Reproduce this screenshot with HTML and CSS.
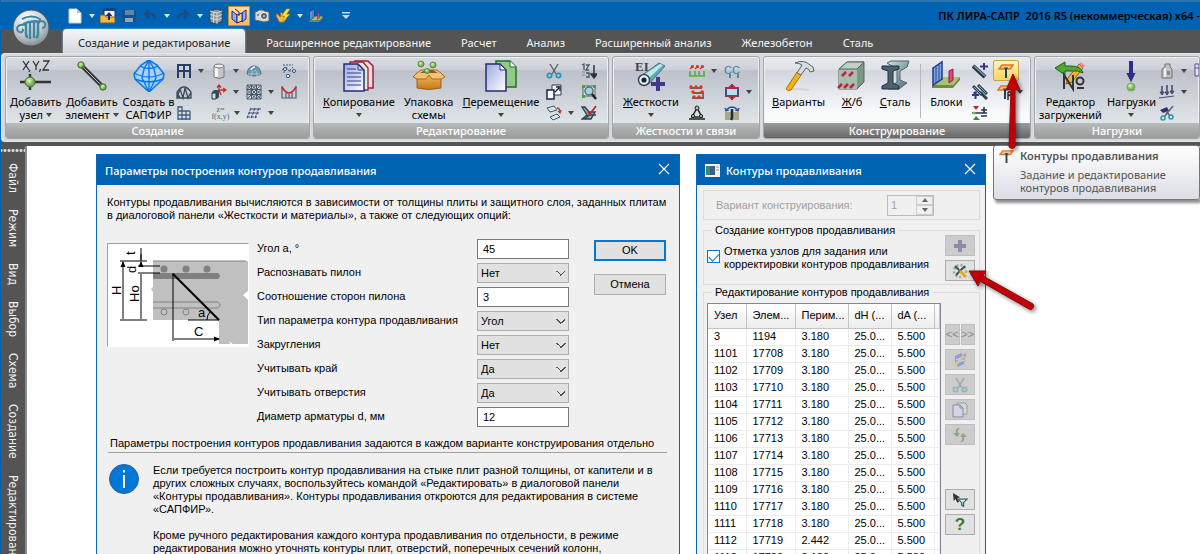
FILE: index.html
```
<!DOCTYPE html>
<html lang="ru">
<head>
  <meta charset="UTF-8" />
  <meta name="viewport" content="width=device-width, initial-scale=1.0"/>
  <title>ПК ЛИРА-САПР 2016 R5</title>
  <link rel="stylesheet" href="styles.css">
</head>
<body>
  <!-- shared icons -->
  <svg class="defs" width="0" height="0">
    <defs>
      <linearGradient id="steel" x1="0" y1="0" x2="1" y2="1"><stop offset="0" stop-color="#cfe0e4"/><stop offset="1" stop-color="#4c6a74"/></linearGradient>
      <linearGradient id="box" x1="0" y1="0" x2="0" y2="1"><stop offset="0" stop-color="#f3b95c"/><stop offset="1" stop-color="#c27a1c"/></linearGradient>
      <linearGradient id="sheet" x1="0" y1="0" x2="1" y2="1"><stop offset="0" stop-color="#9aa9e0"/><stop offset="1" stop-color="#fff"/></linearGradient>
      <radialGradient id="node" cx=".4" cy=".35"><stop offset="0" stop-color="#d8f5b8"/><stop offset="1" stop-color="#6bb04a"/></radialGradient>
      <radialGradient id="orb" cx=".4" cy=".25" r=".8"><stop offset="0" stop-color="#fff"/><stop offset=".6" stop-color="#c3c8cc"/><stop offset="1" stop-color="#7e8488"/></radialGradient>
      <marker id="tip" viewBox="0 0 6 6" refX="5" refY="3" markerWidth="6" markerHeight="6" orient="auto-start-reverse"><path d="M0 0.5L6 3L0 5.5z"/></marker>
    </defs>
    <symbol id="i-blocks" viewBox="0 0 32 32"><path d="M2 25l8-8h20l-7 8z" fill="#a9c46c"/><path d="M2 25h21l7-8v3l-7 8H2z" fill="#6d8c3c"/><path d="M3 8l9-6v17l-9 6z" fill="#7fa3dd" stroke="#1f3c86" stroke-width="1.5"/><path d="M6 7v16M9 5v16" stroke="#2c4f9f"/><path d="M19 11l4-2v11l-4 3z" fill="#d94b78" stroke="#8e1f45"/></symbol>
    <symbol id="i-punch" viewBox="0 0 16 16"><path d="M4 2h11l-3 4H1z" fill="#f9c48a" stroke="#e07818" stroke-width="1.5"/><path d="M8 5v10" stroke="#20405e" stroke-width="2"/><path d="M6 5h4" stroke="#20405e"/></symbol>
    <symbol id="i-cut" viewBox="0 0 16 16"><path d="M4 1l6 10M12 1L6 11" stroke="#59656c" stroke-width="1.4" fill="none"/><circle cx="3.500" cy="12.500" r="2.200" fill="none" stroke="#2a94b8" stroke-width="1.700"/><circle cx="12.500" cy="12.500" r="2.200" fill="none" stroke="#2a94b8" stroke-width="1.700"/></symbol>
    <symbol id="i-caret" viewBox="0 0 6 4"><path d="M0 0h6L3 4z"/></symbol>
    <symbol id="i-close" viewBox="0 0 12 12"><path d="M1 1l10 10M11 1L1 11" stroke="#fff" stroke-width="1.200"/></symbol>
  </svg>

  <header class="titlebar">
    <nav class="quick" aria-label="Быстрый доступ">
      <button class="qbtn" aria-label="Новый"><svg viewBox="0 0 16 16"><path d="M2 1h8l4 4v10H2z" fill="#fff" stroke="#c8d0d8"/><path d="M10 1v4h4z" fill="#b8c0c8"/></svg><svg class="caret"><use href="#i-caret"/></svg></button>
      <button class="qbtn" aria-label="Открыть"><svg viewBox="0 0 16 16"><path d="M4 1h11v9H4z" fill="#f4f8fc" stroke="#1c3158"/><path d="M4 1h11v2H4z" fill="#24406e"/><path d="M0 15V7h5l1 2h9v6z" fill="#f0b84a" stroke="#8a5a10"/><path d="M9 4L5.500 8H8v4h2V8h2.500z" fill="#1c3158"/></svg></button>
      <button class="qbtn" aria-label="Сохранить"><svg viewBox="0 0 16 16"><path d="M1 2h14v12H2l-1-1z" fill="#195088"/><path d="M4 2h9v5H4z" fill="#5c86aa"/><path d="M4 10h8v4H4z" fill="#8ba9c0"/></svg></button>
      <button class="qbtn" aria-label="Отменить"><svg viewBox="0 0 16 16"><path d="M3 6h6q4 0 4 5M7 2L3 6l4 4" fill="none" stroke="#1a4c88" stroke-width="2.500"/></svg><svg class="caret"><use href="#i-caret"/></svg></button>
      <button class="qbtn" aria-label="Вернуть"><svg viewBox="0 0 16 16"><path d="M13 6H7q-4 0-4 5M9 2l4 4-4 4" fill="none" stroke="#1a4c88" stroke-width="2.500"/></svg><svg class="caret"><use href="#i-caret"/></svg></button>
      <button class="qbtn" aria-label="Куб"><svg viewBox="0 0 16 16"><path d="M2 3l7-2 5 2v10l-5 3-7-2z" fill="#8c999e" stroke="#38464c"/><path d="M2 3l7 2 5-2M9 5v11M2 6.500l7 2M2 10l7 2M9 8.500l5-2M9 12l5-2M5.500 4v11" fill="none" stroke="#dbe6ea" stroke-width=".8"/></svg></button>
      <button class="qbtn picked" aria-label="Книга"><svg viewBox="0 0 16 16"><path d="M1 3l5 4v8l-5-4zM11 5l4-3v9l-4 3z" fill="#8db0e0" stroke="#1e2a78"/><path d="M6 7l5-2v8l-5 2z" fill="#f8d890" stroke="#1e2a78"/><path d="M4 1l4 3v4" fill="none" stroke="#1e2a78"/></svg></button>
      <button class="qbtn" aria-label="Снимок"><svg viewBox="0 0 16 16"><path d="M1 4l3-1 1-1h4l1 1 5 1v9l-5 1-9-2z" fill="#d3d6d6" stroke="#666"/><circle cx="10" cy="8" r="3.500" fill="#454d54" stroke="#fff"/><circle cx="10" cy="8" r="1.500" fill="#8cb0d0"/><path d="M3 6h2v2H3z" fill="#888"/></svg></button>
      <button class="qbtn" aria-label="Расчет"><svg viewBox="0 0 18 16"><path d="M2 5l4 4V4h2l1 4 2 1 2 2-3 4H5L1 8z" fill="#f1ba55" stroke="#8a5510" stroke-width=".8"/><path d="M13 0L7 8h4l-3 7 9-9h-4l4-6z" fill="#ffe437" stroke="#b98a00" stroke-width=".7"/></svg><svg class="caret"><use href="#i-caret"/></svg></button>
      <button class="qbtn" aria-label="Блоки"><svg><use href="#i-blocks"/></svg></button>
      <button class="qbtn more" aria-label="Настройка"><svg viewBox="0 0 8 8"><path d="M0 0h8v1.500H0zM0 3h8L4 7z" fill="#cfd9e4"/></svg></button>
    </nav>
    <div class="app-title">ПК ЛИРА-САПР&nbsp; 2016 R5 (некоммерческая) x64 -</div>
  </header>
  <button class="app-orb" aria-label="Меню приложения">
    <svg viewBox="0 0 38 38"><circle cx="19" cy="19" r="18" fill="url(#orb)" stroke="#4d5458"/><g fill="none" stroke="#3f86a4" stroke-width="2"><path d="M13 16q-8-1-8 4 1 4 5 3 2-2 0-3M10 10q10-5 18 0l-2 4q4-4 7 0 1 5-3 5"/><path d="M14 13v12q0 3 2 3M18 13v17M22 12v17M26 12v13q0 3-2 4M11 15q8-4 17-2" stroke-width="2.500"/></g><path d="M12 12q8-4 15-1" fill="none" stroke="#bfe2ee"/></svg>
  </button>

  <nav class="tabs">
    <a class="active" href="#create">Создание и редактирование</a>
    <a href="#advanced">Расширенное редактирование</a>
    <a href="#calc">Расчет</a>
    <a href="#analysis">Анализ</a>
    <a href="#deep">Расширенный анализ</a>
    <a href="#concrete">Железобетон</a>
    <a href="#steel">Сталь</a>
  </nav>

  <main class="ribbon">
    <section class="group">
      <div class="tools">
        <button class="big"><svg viewBox="0 0 32 32"><g fill="none" stroke="#333" stroke-width="1.300"><path d="M3 1l6 9M9 1l-6 9M10 10l-1 2M13 1l3 5 3-5M16 6v4M20.500 9l-1 3M23 1h6l-6 9h6"/></g><path d="M0 22h31M10 14v16" stroke="#333" stroke-width="2.500"/><circle cx="10" cy="22" r="5" fill="url(#node)" stroke="#3f6b2b"/></svg><span>Добавить<br>узел <svg class="caret"><use href="#i-caret"/></svg></span></button>
        <button class="big"><svg viewBox="0 0 32 32"><path d="M5 5l22 22" stroke="#333" stroke-width="4"/><path d="M5 5l22 22" stroke="#b8bcbc"/><circle cx="5" cy="5" r="3.200" fill="url(#node)" stroke="#3f6b2b"/><circle cx="27" cy="27" r="3.200" fill="url(#node)" stroke="#3f6b2b"/></svg><span>Добавить<br>элемент <svg class="caret"><use href="#i-caret"/></svg></span></button>
        <button class="big"><svg viewBox="0 0 32 32"><path d="M16 0L8 5 1 14l1 5 14 13 14-13 1-5-7-9z" fill="#a9d0f8" stroke="#0878e8" stroke-width="1.500"/><path d="M16 0v32M16 0l-5 9-2 9 7 14 7-14-2-9zM7 6q9 5 18 0M1 13q15 8 30 0M2 19q14 6 28 0" fill="none" stroke="#0878e8" stroke-width="1.400"/></svg><span>Создать в<br>САПФИР</span></button>
        <div class="small-grid four">
          <button class="small" aria-label="Рама"><svg viewBox="0 0 16 16"><path d="M2 15V2h12v13M2 8h12M8 2v13" fill="none" stroke="#253f66" stroke-width="2"/></svg><svg class="caret"><use href="#i-caret"/></svg></button>
          <button class="small" aria-label="Цилиндр"><svg viewBox="0 0 16 16"><path d="M3 3v11q5 3 10 0V3q-5-3-10 0z" fill="#c4c6ca" stroke="#777"/><path d="M4.500 4.500v9.500M6 5v9" stroke="#fff" stroke-width="1.500"/><ellipse cx="8" cy="3" rx="5" ry="2" fill="#edeef0" stroke="#777"/></svg><svg class="caret"><use href="#i-caret"/></svg></button>
          <button class="small" aria-label="Купол"><svg viewBox="0 0 16 16"><path d="M1 11q1-8 7-8t7 8q-7 4-14 0z" fill="#6d98aa" stroke="#52717e"/><path d="M5 7q1-3 4-3" fill="none" stroke="#e4f2f6" stroke-width="1.500"/><path d="M2 11h12M5 13q1-4 2-5M11 13q0-4-2-6" fill="none" stroke="#a4c8d6"/></svg></button>
          <button class="small" aria-label="Ферма"><svg viewBox="0 0 16 16"><path d="M2 2h10M1 7l4-3M5 4l3 4 4-4M8 8h7M2 9h3" stroke="#455c78" fill="none" stroke-dasharray="2 1"/><circle cx="4" cy="6" r="1.500" fill="#fff" stroke="#2c4a6e"/><circle cx="13" cy="8" r="1.500" fill="#fff" stroke="#2c4a6e"/><circle cx="7" cy="13" r="1.700" fill="#fff" stroke="#2c4a6e"/></svg></button>
          <button class="small" aria-label="Арка"><svg viewBox="0 0 16 16"><path d="M1 14V8q7-10 14 0v6zM1 14l3-9 3 9 2-10 3 10 3-6M4 14l-3-6" fill="none" stroke="#374a58" stroke-width="1.300"/></svg></button>
          <button class="small" aria-label="Экструзия"><svg viewBox="0 0 16 16"><path d="M1 8l2-2h5v7l-2 2H1z" fill="#38505e"/><path d="M1 9h4v6H1z" fill="#c4e4f4" stroke="#234"/><path d="M8 6V2M6 3.500L8 1l2 2.500M8 6h6M12 4l3 2-3 2M8 6l2 5" fill="none" stroke="#cc2820" stroke-width="1.300"/></svg><svg class="caret"><use href="#i-caret"/></svg></button>
          <button class="small" aria-label="Сетка"><svg viewBox="0 0 16 16"><path d="M1 1h14v14H1zM1 5.500h14M1 10.500h14M5.500 1v14M10.500 1v14M1 5.500L5.500 1M1 10.500L10.500 1M1 15L15 1M5.500 15L15 5.500M10.500 15l4.500-4.500M1 1l14 14M5.500 1L15 10.500M1 5.500l9.500 9.500" fill="none" stroke="#3d5062" stroke-width=".9"/></svg><svg class="caret"><use href="#i-caret"/></svg></button>
          <button class="small" aria-label="Провис"><svg viewBox="0 0 16 16"><path d="M1 2v12h14V2M5 9v5M8 10v4M11 9v5" fill="none" stroke="#4a5d70" stroke-width="1.200"/><path d="M1 3q7 12 14 0" fill="none" stroke="#cf2524" stroke-width="1.700"/></svg></button>
          <button class="small" aria-label="Каркас"><svg viewBox="0 0 16 16"><path d="M2 1v14M6 1v14M10 6v9M14 6v9M2 2h4M2 6h12M2 10h12M2 14h12" fill="none" stroke="#3f5f84" stroke-width="1.300"/></svg></button>
          <button class="small fx"><span>z=<br>f(x,y)</span><svg class="caret"><use href="#i-caret"/></svg></button>
          <button class="small" aria-label="Плита"><svg viewBox="0 0 16 16"><path d="M5 4h10M3 8h10M1 12h10M5 3L1 13M9 3L5 13M13 3L9 13" fill="none" stroke="#46507e" stroke-width="1.200" stroke-dasharray="3 1"/></svg><svg class="caret"><use href="#i-caret"/></svg></button>
        </div>
      </div>
      <h2>Создание</h2>
    </section>

    <section class="group edit">
      <div class="tools">
        <button class="big"><svg viewBox="0 0 32 32"><path d="M12 1h13l5 5v22H12z" fill="#f6dde2" stroke="#9a2038" stroke-width="1.500"/><path d="M7 2h13l5 6v22H7z" fill="#dcedd8" stroke="#9a2038" stroke-width="1.300"/><path d="M1 4h14l6 6v21H1z" fill="url(#sheet)" stroke="#2a2b72" stroke-width="1.500"/><path d="M15 4v6h6M4 9h9M4 13h14M4 17h14M4 21h14M4 25h14" fill="none" stroke="#343a86"/></svg><span><u>К</u>опирование<br><svg class="caret"><use href="#i-caret"/></svg></span></button>
        <button class="big"><svg viewBox="0 0 32 32"><path d="M4 14h24v14q-12 3-24 0z" fill="url(#box)" stroke="#9e6014"/><path d="M4 13L0 17l4 2h9l3-4 3 4h9l4-2-4-4-4-3H8z" fill="#f3c272" stroke="#a86915"/><path d="M7 13h18l-5-3h-8z" fill="#8f5b18"/><circle cx="8" cy="4" r="3" fill="url(#node)" stroke="#588d40"/><circle cx="20" cy="5" r="3" fill="url(#node)" stroke="#588d40"/><circle cx="14" cy="11" r="2.500" fill="url(#node)" stroke="#588d40"/></svg><span>Упаковка<br>схемы</span></button>
        <button class="big"><svg viewBox="0 0 32 32"><path d="M11 1h14l6 6v20H11z" fill="#92cc84" stroke="#246b30" stroke-width="1.500"/><path d="M25 1v6h6" fill="#fff" stroke="#246b30"/><path d="M1 4h14l6 6v21H1z" fill="url(#sheet)" stroke="#2a2b72" stroke-width="1.500"/><path d="M15 4v6h6z" fill="#fff" stroke="#2a2b72"/></svg><span><u>П</u>еремещение<br><svg class="caret"><use href="#i-caret"/></svg></span></button>
        <div class="small-grid two">
          <button class="small" aria-label="Вырезать"><svg><use href="#i-cut"/></svg></button>
          <button class="small" aria-label="Нумерация"><svg viewBox="0 0 16 16"><path d="M1 2l2-1v6M5 2h3L5 7h3M5 10h3v4H5" fill="none" stroke="#455464" stroke-width="1.300"/><path d="M13 2v10M10 11l3 4 3-4z" stroke="#333" fill="#333" stroke-width="1.500"/><path d="M1 9h3M1 12h3" stroke="#888"/></svg></button>
          <button class="small" aria-label="Масштаб"><svg viewBox="0 0 16 16"><path d="M6 1h9v10H6z" fill="#f4f6fa" stroke="#2d3260"/><path d="M1 6h7v9H1z" fill="#fff" stroke="#20205c" stroke-width="1.500"/><path d="M9 8l4-4M10 3h4v4" fill="none" stroke="#222" stroke-width="1.300"/></svg></button>
          <button class="small" aria-label="Лупа"><svg viewBox="0 0 16 16"><path d="M2 2h12v10H2z" fill="#dce8ec" stroke="#4a645c"/><circle cx="8" cy="7" r="4" fill="#a6d1e2" stroke="#596a72" stroke-width="1.500"/><path d="M11 10l4 5" stroke="#222" stroke-width="2.500"/><path d="M1 1h3v3H1zM12 1h3v3h-3zM1 11h3v3H1z" fill="#47a03b"/></svg></button>
          <button class="small" aria-label="Поворот"><svg viewBox="0 0 16 16"><path d="M1 3l7-2 3 4-7 2zM4 12l7-3 3 3-7 3z" fill="#d7e7ec" stroke="#385968"/><path d="M11 3q3 0 3 4M12 6l2 2 1-3" fill="none" stroke="#c83428" stroke-width="1.300"/></svg><svg class="caret"><use href="#i-caret"/></svg></button>
          <button class="small" aria-label="Правка"><svg viewBox="0 0 16 16"><path d="M1 2h3l4 5h6l-4 7H1l5-4z" fill="#8fa9b4" stroke="#2e4550" stroke-width="1.400"/><path d="M4 14l4-4h7" fill="none" stroke="#2e4550" stroke-width="1.300"/><path d="M15 1L9 9 7 7" fill="none" stroke="#c62828" stroke-width="1.800"/></svg></button>
        </div>
      </div>
      <h2>Редактирование</h2>
    </section>

    <section class="group stiff">
      <div class="tools">
        <button class="big"><svg viewBox="0 0 32 32"><text x="0" y="11" class="ei">EI</text><path d="M6 16L24 3l6 3-16 18z" fill="#5fa9b4" stroke="#51717a"/><path d="M10 14L25 4l3 1-14 13z" fill="#b8ecec"/><circle cx="9" cy="20" r="5.500" fill="#eef1f4" stroke="#404858" stroke-width="1.500"/><circle cx="9" cy="20" r="2.600" fill="#16213a"/><path d="M16 24h14M23 17v14" stroke="#43388a" stroke-width="4"/></svg><span><u>Ж</u>есткости<br><svg class="caret"><use href="#i-caret"/></svg></span></button>
        <div class="small-grid two">
          <button class="small" aria-label="Связи"><svg viewBox="0 0 16 16"><path d="M1 6l3-3M2 3h2v2M6 6l3-3M7 3h2v2M11 6l3-3M12 3h2v2" fill="none" stroke="#cf3028" stroke-width="1.500"/><path d="M0 13h16M1 8v5M6 8v5M10 8v5M15 8v5" stroke="#55b436" stroke-width="1.700"/></svg><svg class="caret"><use href="#i-caret"/></svg></button>
          <button class="small" aria-label="Упругое основание"><svg viewBox="0 0 16 16"><text x="0" y="11" class="cc">CC</text><path d="M6 11v4M14 11v4" stroke="#333"/></svg></button>
          <button class="small" aria-label="Объединение"><svg viewBox="0 0 16 16"><path d="M1 4h12M4 9h10M3 14h12M2 2v3M14 7v6" stroke="#6c3228" stroke-width="1.300"/><g fill="#e23422"><circle cx="2" cy="3" r="1.700"/><circle cx="7" cy="3" r="1.700"/><circle cx="12" cy="3" r="1.700"/><circle cx="4" cy="8" r="1.700"/><circle cx="13" cy="8" r="1.700"/><circle cx="5" cy="13" r="1.700"/><circle cx="10" cy="13" r="1.700"/></g></svg></button>
          <button class="small" aria-label="Сечение"><svg viewBox="0 0 16 16"><path d="M8 0v3M8 13v3" stroke="#333" stroke-width="2"/><path d="M2 4h12v8H2z" fill="#b9ddec" stroke="#1e448a" stroke-width="1.800"/><path d="M1 4h14M1 12h14M5 3l3-2 3 2M5 13l3 2 3-2" fill="none" stroke="#c52d38" stroke-width="1.500"/></svg><svg class="caret"><use href="#i-caret"/></svg></button>
          <button class="small" aria-label="Опора"><svg viewBox="0 0 16 16"><path d="M8 3L3 12h10zM0 14h16" fill="none" stroke="#222" stroke-width="1.500"/><circle cx="8" cy="3" r="2" fill="#9ec4d4" stroke="#222"/><circle cx="4" cy="11" r="1.600" fill="#9ec4d4" stroke="#222"/><circle cx="12" cy="11" r="1.600" fill="#9ec4d4" stroke="#222"/></svg></button>
          <button class="small" aria-label="Свая"><svg viewBox="0 0 16 16"><path d="M1 7h14v8H1z" fill="#a9a78e"/><path d="M8 4v9l-1 2" stroke="#252a30" stroke-width="2.500"/><path d="M2 5q6-6 12 0M1 3l1 3 3-1M15 3l-1 3-3-1" fill="none" stroke="#2f4e9a" stroke-width="1.300"/></svg></button>
        </div>
      </div>
      <h2>Жесткости и связи</h2>
    </section>

    <section class="group design hot">
      <div class="tools">
        <button class="big"><svg viewBox="0 0 32 32"><path d="M4 30q10-2 22 0" stroke="#d2d4d8" stroke-width="2"/><path d="M14 12l4 3L8 30q-3 2-5-1z" fill="#f3b20e" stroke="#aa7600"/><path d="M14 13l5-8q-3-2-7-2 9-4 15 2 4 1 4 6l-4 1q0-3-4-4l-5 7z" fill="#d5dbde" stroke="#56636b"/></svg><span><u>В</u>арианты</span></button>
        <button class="big"><svg viewBox="0 0 32 32"><path d="M3 9l8-7h17v20l-7 7H3z" fill="#7c9688" stroke="#51695c"/><path d="M3 9h18v20H3z" fill="#a7bdaf"/><path d="M3 9l8-7h17l-7 7z" fill="#c0d0c6" stroke="#51695c"/><path d="M6 16l4-4M13 16l4-4M2 28l4-4M8 28l4-4M14 28l4-4" stroke="#c61e3e" stroke-width="2.500"/></svg><span><u>Ж</u>/б</span></button>
        <button class="big"><svg viewBox="0 0 32 32"><path d="M8 3l4-2h18l-2 6-7 4v9l7 3-8 6H9l9-7V9z" fill="url(#steel)" stroke="#50666f"/><path d="M3 6h17v3l-6 2v12l6 3v3H3v-3l6-3V11L3 9z" fill="#4a626e" stroke="#22343e"/></svg><span><u>С</u>таль</span></button>
        <div class="sep"></div>
        <button class="big"><svg><use href="#i-blocks"/></svg><span>Блоки</span></button>
        <div class="small-grid two">
          <button class="small" aria-label="Стержень"><svg viewBox="0 0 16 16"><path d="M1 3l12 11" stroke="#22343e" stroke-width="4"/><path d="M2 3l11 10" stroke="#6e9aa6" stroke-width="1.500"/><path d="M8 3.500h8M12 0v7" stroke="#3b3488" stroke-width="2"/></svg></button>
          <button class="small picked" aria-label="Контуры продавливания"><svg><use href="#i-punch"/></svg></button>
          <button class="small" aria-label="Стержни"><svg viewBox="0 0 16 16"><path d="M1 2l9 9M6 1l9 9M8 8l7 7M2 8l2 2" stroke="#29404c" stroke-width="3"/><path d="M7 2l7 7M2 3l7 7" stroke="#88b4c4"/><path d="M0 11h7M3.500 8v7" stroke="#3b3488" stroke-width="2"/></svg></button>
          <button class="small punch2" aria-label="Продавливание"><svg viewBox="0 0 16 16"><use href="#i-punch"/><path d="M11 8v8M11 8h3q2 2-3 4" fill="none" stroke="#333" stroke-width="1.500"/></svg><svg class="caret"><use href="#i-caret"/></svg></button>
          <button class="small" aria-label="Раскрепление"><svg viewBox="0 0 16 16"><path d="M1 1h6L4 5z" fill="#b82834"/><path d="M4 11l4 4H1z" fill="#39874a"/><path d="M0 8h15M9 5h6M9 11h6M12 2v6" stroke="#28304c" stroke-width="1.600"/><circle cx="2" cy="8" r="1.600" fill="#7fbc70"/></svg></button>
        </div>
      </div>
      <h2>Конструирование</h2>
    </section>

    <section class="group loads">
      <div class="tools">
        <button class="big"><svg viewBox="0 0 32 32"><path d="M25 4l4 4-11 14-6 2 2-6z" fill="#f0b23a" stroke="#8e5d18"/><path d="M25 4l2-2 4 4-2 2z" fill="#e8889a"/><path d="M1 8l10-6v4h6q10 0 12 7-5-3-12-2h-6v4z" fill="#52a835" stroke="#226010"/><path d="M10 29V15l9 14V15M30 28h-7" fill="none" stroke="#333" stroke-width="2"/><circle cx="26" cy="21" r="3.500" fill="none" stroke="#333" stroke-width="2"/></svg><span>Редактор<br>загружений</span></button>
        <button class="big"><svg viewBox="0 0 32 32"><path d="M16 1v15" stroke="#302c82" stroke-width="4"/><path d="M13 14l3 6 3-6z" stroke="#302c82" stroke-width="2" fill="#302c82"/><circle cx="16" cy="27" r="4" fill="url(#node)" stroke="#78a468"/></svg><span>Нагрузки<br><svg class="caret"><use href="#i-caret"/></svg></span></button>
        <div class="small-grid two">
          <button class="small" aria-label="Вес"><svg viewBox="0 0 16 16"><path d="M6 1h5v3l2 2v9H3V6l3-2z" fill="#c0c4c6" stroke="#6c7174"/><path d="M6 5v9" stroke="#fff" stroke-width="1.500"/><path d="M8 8h3v4H8z" fill="#888"/></svg><svg class="caret"><use href="#i-caret"/></svg></button>
          <button class="small" aria-label="Таблица"><svg viewBox="0 0 16 16"><path d="M1 1h14v12H1zM1 5h14M5 1v12" fill="#e4e4f4" stroke="#574b98"/></svg></button>
          <button class="small" aria-label="Распределенная"><svg viewBox="0 0 16 16"><path d="M3 2v8M8 1v9M13 1v8" stroke="#454278" stroke-width="1.500"/><path d="M1 8l2 3 2-3zM6 8l2 3 2-3zM11 7l2 3 2-3zM0 14l15-2" stroke="#4d4a70" fill="#454278"/></svg><svg class="caret"><use href="#i-caret"/></svg></button>
          <span></span>
          <button class="small" aria-label="Удалить нагрузку"><svg viewBox="0 0 16 16"><path d="M1 5l7-3 2 4-6 2z" fill="#342f78"/><path d="M7 6l4 5M14 1L5 12" stroke="#59656c" stroke-width="1.500"/><circle cx="4" cy="13" r="2" fill="none" stroke="#2a94b8" stroke-width="1.500"/><circle cx="12" cy="12" r="2" fill="none" stroke="#2a94b8" stroke-width="1.500"/></svg></button>
        </div>
      </div>
      <h2>Нагрузки</h2>
    </section>
  </main>

  <div class="workspace">
    <nav class="rail">
      <a href="#file">Файл</a>
      <a href="#mode">Режим</a>
      <a href="#view">Вид</a>
      <a href="#select">Выбор</a>
      <a href="#scheme">Схема</a>
      <a href="#new">Создание</a>
      <a href="#edit">Редактирование</a>
    </nav>

    <div class="desktop">
      <!-- Parameters dialog -->
      <section class="dialog params">
        <header class="caption"><h1>Параметры построения контуров продавливания</h1><button class="close" aria-label="Закрыть"><svg><use href="#i-close"/></svg></button></header>
        <form class="dialog-body">
          <p>Контуры продавливания вычисляются в зависимости от толщины плиты и защитного слоя, заданных плитам<br>в диалоговой панели «Жесткости и материалы», а также от следующих опций:</p>
          <div class="settings">
            <svg class="scheme" viewBox="0 0 140 102">
              <path d="M45 17h95v83h-29V76H45V48l-2-3 2-2z" fill="#c0c0c0"/>
              <path d="M45 17h93" stroke="#808080"/>
              <path d="M45 29h65q4 3 0 6H45z" fill="#808080"/><path d="M45 58h65q4 3 0 6H45" fill="none" stroke="#808080"/>
              <g fill="#808080"><circle cx="56" cy="25" r="3.500"/><circle cx="78" cy="25" r="3.500"/><circle cx="99" cy="25" r="3.500"/></g>
              <g fill="none" stroke="#808080"><circle cx="56" cy="68" r="3"/><circle cx="78" cy="68" r="3"/></g>
              <path d="M140 47l-5 4 5 5zM126 101l-5-4 2 4z" fill="#fff"/>
              <g stroke="#000" fill="none">
                <path d="M12 17h27M12 76h27M30 22h22M30 29h22M33 4v13M65 29v68M80 76h31"/>
                <path d="M15 18v57M33 30v45M66 95h45" marker-start="url(#tip)" marker-end="url(#tip)"/>
                <path d="M33 10v6M33 22v-4" marker-end="url(#tip)"/>
                <path d="M65 30l46 46" stroke-width="2"/>
                <path d="M99 76q0-5 3-8"/>
              </g>
              <g class="dims"><text x="86" y="92">C</text><text x="90" y="73">a</text><text transform="rotate(-90 13 51)" x="13" y="51">H</text><text transform="rotate(-90 31 58)" x="31" y="58">Ho</text><text transform="rotate(-90 28 29)" x="28" y="29">d</text><text transform="rotate(-90 27 11)" x="27" y="11">t</text></g>
            </svg>
            <div class="fields">
              <label for="angle">Угол a, °</label><input id="angle" type="text" value="45">
              <label for="pylon">Распознавать пилон</label><select id="pylon"><option>Нет</option><option>Да</option></select>
              <label for="ratio">Соотношение сторон пилона</label><input id="ratio" type="text" value="3">
              <label for="kind">Тип параметра контура продавливания</label><select id="kind"><option>Угол</option></select>
              <label for="round">Закругления</label><select id="round"><option>Нет</option><option>Да</option></select>
              <label for="edge">Учитывать край</label><select id="edge"><option>Да</option><option>Нет</option></select>
              <label for="holes">Учитывать отверстия</label><select id="holes"><option>Да</option><option>Нет</option></select>
              <label for="diam">Диаметр арматуры d, мм</label><input id="diam" type="text" value="12">
            </div>
            <div class="actions">
              <button type="button" class="default">OK</button>
              <button type="button">Отмена</button>
            </div>
          </div>
          <p class="note">Параметры построения контуров продавливания задаются в каждом варианте конструирования отдельно</p>
          <div class="info">
            <svg viewBox="0 0 30 30"><circle cx="15" cy="15" r="14.500" fill="#0078d7" stroke="#2d5f90"/><path d="M15 11v13M15 6v2.500" stroke="#fff" stroke-width="2"/></svg>
            <div>
              <p>Если требуется построить контур продавливания на стыке плит разной толщины, от капители и в<br>других сложных случаях, воспользуйтесь командой «Редактировать» в диалоговой панели<br>«Контуры продавливания». Контуры продавливания откроются для редактирования в системе<br>«САПФИР».</p>
              <p>Кроме ручного редактирования каждого контура продавливания по отдельности, в режиме<br>редактирования можно уточнять контуры плит, отверстий, поперечных сечений колонн,</p>
            </div>
          </div>
        </form>
      </section>

      <!-- Contours dialog -->
      <section class="dialog contours">
        <header class="caption"><svg class="win-icon" viewBox="0 0 15 13"><path d="M0 0h15v13H0z" fill="#f4f4f4"/><path d="M1 2h9v9H1z" fill="#2f8c78"/><path d="M5 2h5v9H5z" fill="#37618c"/><path d="M11 3h3M11 6h3" stroke="#999"/></svg><h1>Контуры продавливания</h1><button class="close" aria-label="Закрыть"><svg><use href="#i-close"/></svg></button></header>
        <form class="dialog-body">
          <div class="box variant">
            <label for="variant">Вариант конструирования:</label>
            <span class="spin"><input id="variant" type="text" value="1" disabled><span class="spin-btns"><button type="button" disabled aria-label="Больше"><svg viewBox="0 0 6 4"><path d="M0 4h6L3 0z"/></svg></button><button type="button" disabled aria-label="Меньше"><svg><use href="#i-caret"/></svg></button></span></span>
          </div>
          <fieldset class="box create">
            <legend>Создание контуров продавливания</legend>
            <input id="marks" type="checkbox" checked><label for="marks">Отметка узлов для задания или<br>корректировки контуров продавливания</label>
            <div class="side">
              <button type="button" disabled aria-label="Добавить"><svg viewBox="0 0 16 16"><path d="M2 8h12M8 2v12" stroke="#8e8ba6" stroke-width="4"/></svg></button>
              <button type="button" aria-label="Параметры"><svg viewBox="0 0 16 16"><circle cx="8" cy="8" r="6" fill="#d9e2e2" stroke="#9aa8a8" stroke-width="2.500" stroke-dasharray="2 2"/><path d="M3 3l4 4M13 3L4 12" stroke="#46525a" stroke-width="2"/><path d="M8 8l6 6" stroke="#edaa10" stroke-width="3"/></svg></button>
            </div>
          </fieldset>
          <fieldset class="box edit-box">
            <legend>Редактирование контуров продавливания</legend>
            <div class="table-wrap">
              <table>
                <colgroup><col class="c1"><col class="c2"><col class="c3"><col class="c4"><col class="c5"><col></colgroup>
                <thead><tr><th>Узел</th><th>Элем...</th><th>Перим...</th><th>dH (...</th><th>dA (...</th><th></th></tr></thead>
                <tbody>
                  <tr><td>3</td><td>1194</td><td>3.180</td><td>25.0...</td><td>5.500</td><td></td></tr>
                  <tr><td>1101</td><td>17708</td><td>3.180</td><td>25.0...</td><td>5.500</td><td></td></tr>
                  <tr><td>1102</td><td>17709</td><td>3.180</td><td>25.0...</td><td>5.500</td><td></td></tr>
                  <tr><td>1103</td><td>17710</td><td>3.180</td><td>25.0...</td><td>5.500</td><td></td></tr>
                  <tr><td>1104</td><td>17711</td><td>3.180</td><td>25.0...</td><td>5.500</td><td></td></tr>
                  <tr><td>1105</td><td>17712</td><td>3.180</td><td>25.0...</td><td>5.500</td><td></td></tr>
                  <tr><td>1106</td><td>17713</td><td>3.180</td><td>25.0...</td><td>5.500</td><td></td></tr>
                  <tr><td>1107</td><td>17714</td><td>3.180</td><td>25.0...</td><td>5.500</td><td></td></tr>
                  <tr><td>1108</td><td>17715</td><td>3.180</td><td>25.0...</td><td>5.500</td><td></td></tr>
                  <tr><td>1109</td><td>17716</td><td>3.180</td><td>25.0...</td><td>5.500</td><td></td></tr>
                  <tr><td>1110</td><td>17717</td><td>3.180</td><td>25.0...</td><td>5.500</td><td></td></tr>
                  <tr><td>1111</td><td>17718</td><td>3.180</td><td>25.0...</td><td>5.500</td><td></td></tr>
                  <tr><td>1112</td><td>17719</td><td>2.442</td><td>25.0...</td><td>5.500</td><td></td></tr>
                  <tr><td>1113</td><td>17720</td><td>3.180</td><td>25.0...</td><td>5.500</td><td></td></tr>
                </tbody>
              </table>
            </div>
            <div class="side">
              <div class="pair"><button type="button" disabled>&lt;&lt;</button><button type="button" disabled>&gt;&gt;</button></div>
              <button type="button" disabled aria-label="Редактировать"><svg viewBox="0 0 16 16"><path d="M3 4l6-3 4 4-1 7-6 3-3-4z" fill="#8fa0d6"/><path d="M4 8l7-3M5 11l7-3" stroke="#dfe4f4"/><path d="M2 14L13 3" stroke="#d8c890" stroke-width="2.500"/><path d="M12 4l2-2" stroke="#d89098" stroke-width="2.500"/></svg></button>
              <button type="button" disabled aria-label="Вырезать"><svg class="faded"><use href="#i-cut"/></svg></button>
              <button type="button" disabled aria-label="Копировать"><svg viewBox="0 0 16 16"><path d="M5 1h8l2 2v9H5z" fill="#d0dcd0" stroke="#94a494"/><path d="M1 3h7l3 3v9H1z" fill="#d4d4e6" stroke="#8888a6"/><path d="M8 3v3h3" fill="none" stroke="#8888a6"/></svg></button>
              <button type="button" disabled aria-label="Обновить"><svg viewBox="0 0 16 16"><path d="M6 1Q3 2 4 6H1l4 4 3-4H6Q5 3 8 1zM10 15q3-1 2-5h3l-4-4-3 4h2q1 3-2 5z" fill="#8ea684"/></svg></button>
              <button type="button" class="apart" aria-label="Фильтр"><svg viewBox="0 0 18 16"><path d="M1 0l1 9 2-2 2 4 2-1-2-4 3-1z" fill="#333"/><path d="M7 7h10l-4 4v4l-2-1v-3z" fill="#e4f4f4" stroke="#2b6470" stroke-width="1.400"/></svg></button>
              <button type="button" class="help">?</button>
            </div>
          </fieldset>
        </form>
      </section>
    </div>
  </div>

  <div class="tooltip">
    <svg><use href="#i-punch"/></svg>
    <div><b>Контуры продавливания</b><p>Задание и редактирование<br>контуров продавливания</p></div>
  </div>
  <svg class="arrow up" viewBox="0 0 24 76"><path d="M12 0L5 16l5-1-2 58q3 3 6 0l0-58 5 1z" fill="#c00008" stroke="#9a0810"/></svg>
  <svg class="arrow left" viewBox="0 0 68 42"><path d="M1 2l17 0-3 5 50 28q2 3-1 5-1 1-3 0L12 12l-2 5z" fill="#c00008" stroke="#8e0810"/></svg>
</body>
</html>
```
FILE: styles.css
```
* {
  box-sizing: border-box;
  margin: 0;
  padding: 0;
}

body {
  display: flex;
  flex-direction: column;
  height: 100vh;
  overflow: hidden;
  position: relative;
  border-left: 1px solid #0063b1;
  background-color: #545454;
  color: #000;
  font-family: "Noto Sans", sans-serif;
  font-size: 11px;
  line-height: 13px;
}

.defs {
  position: absolute;
}

button,
input,
select {
  font: inherit;
  color: inherit;
}

button {
  border: none;
  background: none;
}

a {
  text-decoration: none;
}

.caret {
  width: 6px;
  height: 4px;
  fill: #444;
}

/* Title bar */
.titlebar {
  flex: none;
  display: flex;
  align-items: center;
  justify-content: space-between;
  height: 29px;
  padding-left: 66px;
  border-top: 2px solid #2c74b0;
  background-color: #0063b1;
}

.quick {
  display: flex;
  align-items: center;
  gap: 5px;
}

.qbtn {
  display: flex;
  align-items: center;
  gap: 6px;
}

.qbtn > svg {
  width: 16px;
  height: 16px;
}

.qbtn > .caret {
  width: 6px;
  height: 4px;
  fill: #d8e2ec;
}

.qbtn.picked {
  margin: 0 -1px;
  padding: 1px 2px;
  border: 1px solid #c58a3c;
  background: linear-gradient(#fbd9a6, #fcb567);
}

.qbtn.more {
  margin-left: 13px;
}

.qbtn.more > svg {
  width: 8px;
  height: 8px;
}

.app-title {
  font-weight: 600;
  white-space: nowrap;
}

.app-orb {
  position: absolute;
  left: 11px;
  top: 9px;
  width: 38px;
  height: 38px;
}

/* Tabs */
.tabs {
  flex: none;
  display: flex;
  height: 24px;
  padding-left: 62px;
}

.tabs a {
  padding: 7px 15px 0;
  color: #f4f4f4;
  white-space: nowrap;
}

.tabs .active {
  margin-right: 6px;
  border-radius: 4px 4px 0 0;
  background: linear-gradient(#f4f6f8, #d4d8de);
  box-shadow: 0 0 2px #bfe6ff;
  color: #222;
}

/* Ribbon */
.ribbon {
  flex: none;
  display: grid;
  grid-template-columns: 305px 296px 148px 268px 1fr;
  gap: 3px;
  height: 89px;
  padding: 2px 0 2px 3px;
  border: 1px solid #e4e6ea;
  border-right: none;
  border-radius: 4px 0 0 4px;
  background-color: #d6d9dd;
  overflow: hidden;
}

.group {
  display: flex;
  flex-direction: column;
  min-width: 0;
  border: 1px solid #a2a5ab;
  border-radius: 3px;
  background: linear-gradient(#d9dbe2 0, #ced1d9 12px, #bcc0ca 14px, #dfe5e8 66px);
  box-shadow: inset 0 0 0 1px #eef0f3;
  overflow: hidden;
}

.group.hot {
  background: linear-gradient(#e9ebf0 0, #dfe1e8 12px, #d3d6de 14px, #f8fafc 56px);
}

.tools {
  flex: 1;
  display: flex;
  padding: 3px 0 0 2px;
}

.edit .tools {
  gap: 5px;
  padding-left: 7px;
}

.stiff .tools {
  gap: 8px;
  padding-left: 8px;
}

.design .tools {
  gap: 7px;
  padding-left: 6px;
}

.loads .tools {
  gap: 1px;
}

.group h2 {
  flex: none;
  height: 15px;
  background: linear-gradient(#b9baba, #9a9b9b);
  color: #fff;
  font-size: 11px;
  font-weight: 500;
  line-height: 15px;
  text-align: center;
}

.group.hot h2 {
  background: linear-gradient(#9b9c9c, #666);
}

.big {
  flex: none;
  display: flex;
  flex-direction: column;
  align-items: center;
  gap: 3px;
  padding: 0 2px;
  min-width: 32px;
  white-space: nowrap;
}

.big > svg {
  width: 32px;
  height: 32px;
}

.big .caret {
  vertical-align: 2px;
}

.sep {
  width: 1px;
  height: 54px;
  margin-top: 4px;
  background-color: #b4b8be;
}

.small-grid {
  display: grid;
  grid-template-rows: repeat(3, 21px);
  align-content: start;
}

.small-grid.four {
  grid-template-columns: repeat(4, 35px);
}

.small-grid.two {
  grid-template-columns: repeat(2, 35px);
}

.design .two {
  grid-template-columns: 21px 32px;
}

.small {
  display: flex;
  align-items: center;
  gap: 6px;
}

.small > svg:first-child {
  flex: none;
  width: 16px;
  height: 16px;
}

.small.picked {
  width: 26px;
  height: 21px;
  padding-left: 4px;
  border: 1px solid #c9a34a;
  border-radius: 2px;
  background: linear-gradient(#fff2c4, #ffd55a);
}

.punch2 {
  gap: 4px;
  padding-left: 4px;
}

.small.fx {
  gap: 5px;
  color: #5a6672;
  font-family: "Liberation Serif", serif;
  font-size: 8px;
  line-height: 7px;
}

.ei {
  font: bold 13px "Liberation Serif", serif;
  fill: #444;
}

.cc {
  font: 11px "Liberation Sans", sans-serif;
  fill: #2888b4;
}

/* Workspace */
.workspace {
  flex: 1;
  display: flex;
  min-height: 0;
  padding-top: 4px;
}

.rail {
  flex: none;
  width: 26px;
  display: flex;
  flex-direction: column;
  align-items: flex-start;
  gap: 16px;
  padding: 17px 0 0 5px;
  border-right: 2px solid #8c8c8c;
  background: radial-gradient(circle, #ddd 1px, transparent 2px) 2px 2px / 4px 5px repeat-x;
  overflow: hidden;
}

.rail a {
  color: #f0f0f0;
  font-family: "DejaVu Sans Condensed", "DejaVu Sans", sans-serif;
  font-size: 12px;
  writing-mode: vertical-rl;
  white-space: nowrap;
}

.desktop {
  flex: 1;
  position: relative;
  background-color: #fff;
  overflow: hidden;
}

/* Dialogs */
.dialog {
  position: absolute;
  top: 8px;
  bottom: 0;
  border: 1px solid #0a66b2;
  border-bottom: none;
  background-color: #f0f0f0;
  overflow: hidden;
  font-family: "Liberation Sans", Arial, sans-serif;
}

.params {
  left: 69px;
  width: 584px;
}

.contours {
  left: 669px;
  width: 290px;
}

.caption {
  display: flex;
  align-items: center;
  height: 30px;
  padding: 0 8px;
  background-color: #0063b1;
}

.caption h1 {
  flex: 1;
  color: #fff;
  font-family: "Noto Sans", sans-serif;
  font-size: 11px;
  font-weight: 500;
}

.win-icon {
  width: 15px;
  height: 13px;
  margin-right: 6px;
}

.close {
  width: 14px;
  height: 14px;
}

.close svg {
  width: 12px;
  height: 12px;
}

.params .dialog-body {
  padding: 11px 10px 0;
}

.params p {
  white-space: nowrap;
}

.settings {
  display: flex;
  margin-top: 17px;
}

.scheme {
  flex: none;
  width: 142px;
  height: 104px;
  margin: 4px 8px 0 0;
  border: 1px solid #a0a0a0;
  border-color: #a0a0a0 #fff #fff #a0a0a0;
  background-color: #fff;
}

.dims {
  font: 13px "Liberation Sans", Arial, sans-serif;
}

.fields {
  flex: 1;
  display: grid;
  grid-template-columns: 1fr 92px;
  grid-auto-rows: 20px;
  gap: 4px 0;
}

.fields label {
  padding-top: 3px;
}

.fields input,
.fields select {
  width: 92px;
  height: 20px;
  border: 1px solid #7a7a7a;
  background-color: #fff;
  padding: 0 5px;
}

.fields select {
  appearance: none;
  padding: 0 3px;
  border-color: #adadad;
  background: linear-gradient(45deg, transparent 50%, #555 50%, #555 62%, transparent 62%) 78px 7px / 5px 5px no-repeat,
    linear-gradient(-45deg, transparent 50%, #555 50%, #555 62%, transparent 62%) 83px 7px / 5px 5px no-repeat,
    #e1e1e1;
}

.actions {
  display: flex;
  flex-direction: column;
  gap: 13px;
  width: 100px;
  padding: 1px 3px 0 25px;
}

.actions button {
  height: 21px;
  border: 1px solid #adadad;
  background-color: #e1e1e1;
}

.actions .default {
  border: 2px solid #0078d7;
}

.params .note {
  margin: 10px 2px 0 1px;
  padding: 0 2px 2px;
  border-bottom: 1px solid #a0a0a0;
}

.info {
  display: flex;
  gap: 14px;
  margin-top: 11px;
}

.info > svg {
  flex: none;
  width: 30px;
  height: 30px;
  margin-left: 2px;
}

.info p {
  margin-bottom: 13px;
}

/* Contours dialog */
.contours .dialog-body {
  padding: 5px 5px 0 6px;
}

.box {
  display: flex;
  border: 1px solid #dcdcdc;
}

.variant {
  align-items: center;
  justify-content: space-between;
  height: 30px;
  padding: 0 45px 0 12px;
  color: #a0a0a0;
}

.spin {
  display: flex;
  width: 47px;
  height: 21px;
  border: 1px solid #bcbcbc;
}

.spin input {
  width: 28px;
  padding-left: 3px;
  border: none;
  background: none;
}

.spin-btns {
  flex: 1;
  display: flex;
  flex-direction: column;
}

.spin-btns button {
  flex: 1;
  display: flex;
  align-items: center;
  justify-content: center;
  border: 1px solid #ccc;
}

.spin-btns svg {
  width: 6px;
  height: 4px;
  fill: #666;
}

legend {
  margin-left: 5px;
  padding: 0 3px;
  height: 13px;
}

.create {
  align-items: flex-start;
  height: 61px;
  margin-top: 4px;
  padding: 7px 4px 0 3px;
}

.create input {
  appearance: none;
  flex: none;
  width: 13px;
  height: 13px;
  margin: 6px 4px 0 0;
  border: 1px solid #0078d7;
  background-color: #fff;
}

.create input:checked::before {
  content: "";
  display: block;
  width: 9px;
  height: 5px;
  margin: 2px 0 0 1px;
  border: solid #0078d7;
  border-width: 0 0 1px 1px;
  transform: rotate(-45deg);
}

.create label {
  flex: 1;
  padding-top: 1px;
  white-space: nowrap;
}

.create .side {
  margin-top: -9px;
}

.edit-box {
  height: 300px;
  margin-top: 1px;
  padding: 4px 4px 0 3px;
}

.side {
  width: 30px;
  display: flex;
  flex-direction: column;
  gap: 4px;
}

.side button {
  display: flex;
  align-items: center;
  justify-content: center;
  width: 30px;
  height: 21px;
  border: 1px solid #adadad;
  background-color: #e1e1e1;
}

.side button:disabled {
  border-color: #bfbfbf;
  background-color: #ccc;
  color: #8a8a8a;
}

.side svg {
  width: 16px;
  height: 16px;
}

.side .faded {
  opacity: 0.4;
}

.edit-box .side {
  padding-top: 21px;
}

.pair {
  display: flex;
  gap: 1px;
}

.side .pair button {
  flex: 1;
  min-width: 0;
}

.side .apart {
  margin-top: 40px;
}

.side .help {
  color: #3b7a2a;
  font-size: 17px;
  font-weight: bold;
}

.table-wrap {
  flex: 1;
  margin-right: 4px;
  border: 1px solid #828790;
  background-color: #fff;
  overflow: hidden;
}

table {
  width: 100%;
  border-collapse: collapse;
  table-layout: fixed;
}

.c1 {
  width: 38px;
}

.c2 {
  width: 49px;
}

.c3 {
  width: 53px;
}

.c4 {
  width: 43px;
}

.c5 {
  width: 43px;
}

th {
  height: 24px;
  padding-left: 6px;
  border-right: 1px solid #c4c4c4;
  border-bottom: 1px solid #c4c4c4;
  background: linear-gradient(#fff, #ececec);
  font-weight: normal;
  text-align: left;
  white-space: nowrap;
}

td {
  height: 17px;
  padding-left: 6px;
  border-right: 1px solid #ececec;
  border-bottom: 1px solid #ececec;
  white-space: nowrap;
}

/* Tooltip and pointers */
.tooltip {
  position: absolute;
  left: 992px;
  right: 0;
  top: 145px;
  display: flex;
  gap: 6px;
  padding: 3px 5px;
  border: 1px solid #767676;
  border-radius: 3px;
  background: linear-gradient(#fff, #dcdde6);
  box-shadow: 2px 3px 3px rgba(0, 0, 0, 0.45);
  color: #555;
  white-space: nowrap;
}

.tooltip svg {
  flex: none;
  width: 15px;
  height: 15px;
}

.tooltip b {
  font-weight: 600;
}

.tooltip p {
  margin: 6px 0 2px;
}

.arrow {
  position: absolute;
  filter: drop-shadow(2px 2px 2px rgba(0, 0, 0, 0.5));
}

.arrow.up {
  left: 1000px;
  top: 74px;
  width: 24px;
  height: 76px;
}

.arrow.left {
  left: 967px;
  top: 269px;
  width: 68px;
  height: 42px;
}
```
